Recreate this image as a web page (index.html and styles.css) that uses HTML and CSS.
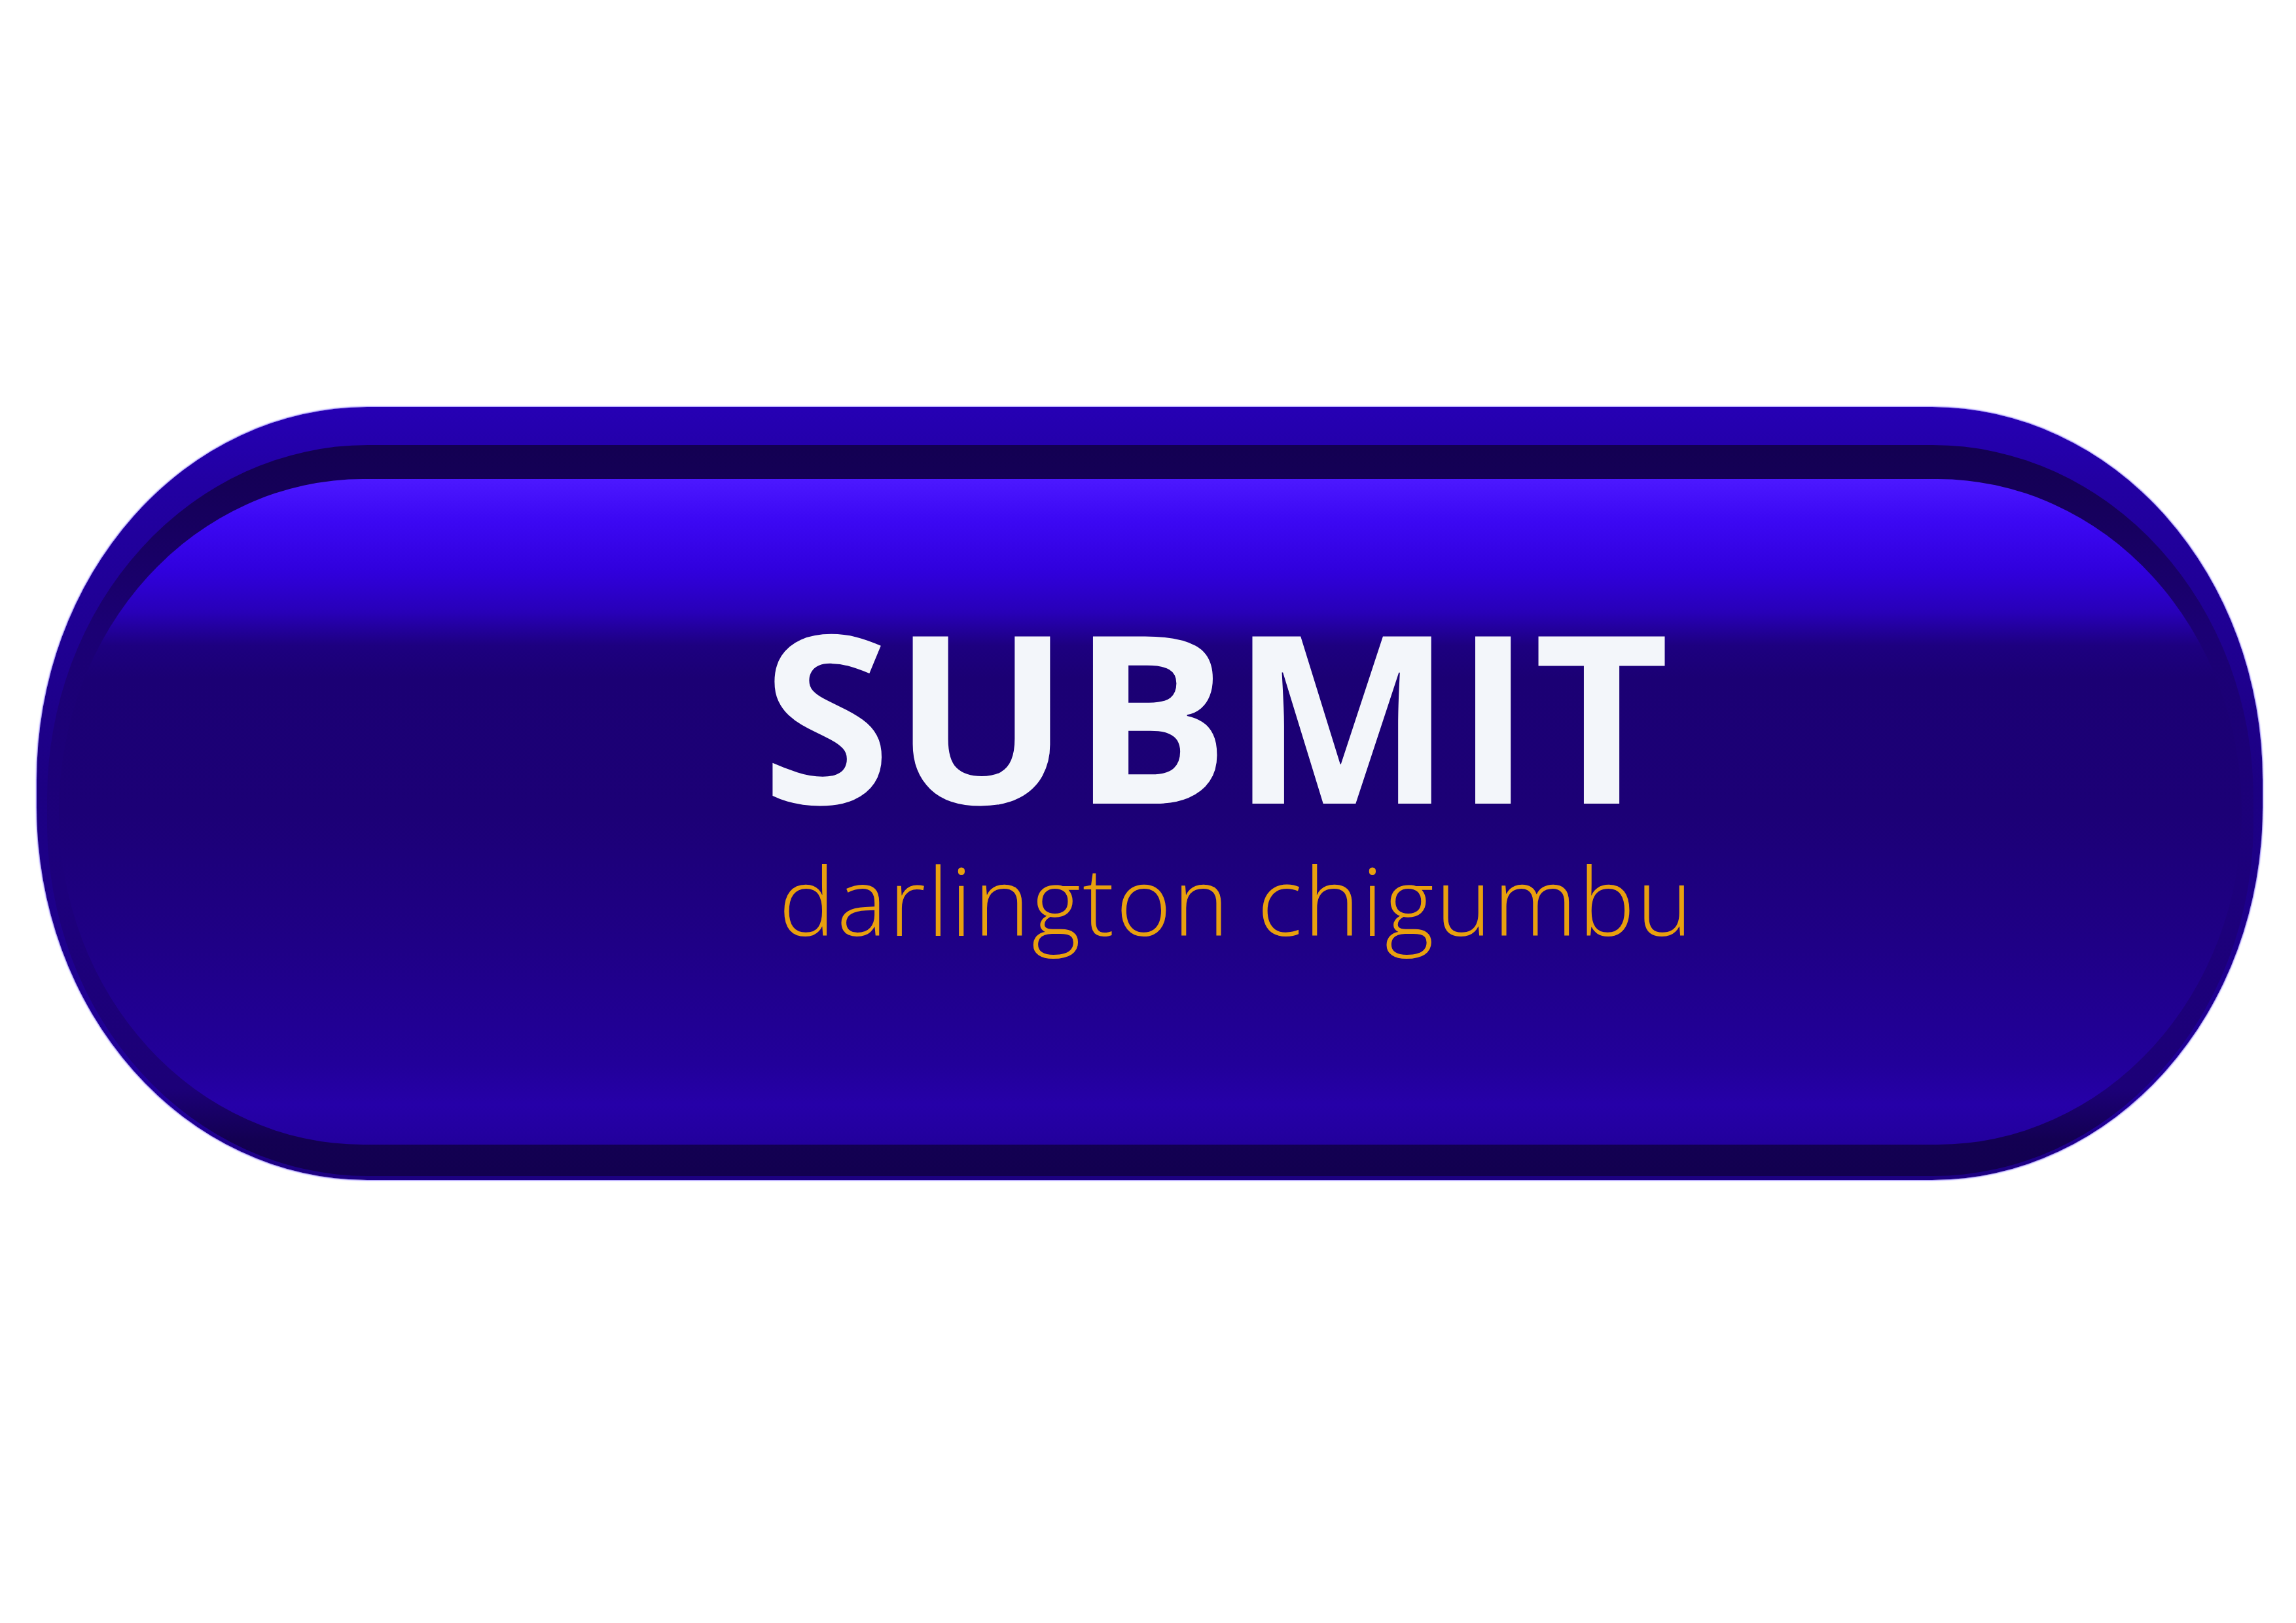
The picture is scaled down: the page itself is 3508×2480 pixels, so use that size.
FILE: index.html
```html
<!DOCTYPE html>
<html lang="en">
<head>
<meta charset="utf-8">
<title>Submit</title>
<link rel="stylesheet" href="styles.css">
</head>
<body>
<main class="stage">
  <div class="shell" role="button" tabindex="0">
    <div class="ring">
      <div class="face">
        <div class="title">SUBMIT</div>
        <div class="subtitle">darlington chigumbu</div>
      </div>
    </div>
  </div>
</main>
</body>
</html>
```

FILE: styles.css
```css
html, body {
  margin: 0;
  padding: 0;
  background: #ffffff;
}

.stage {
  width: 3508px;
  height: 2480px;
  box-sizing: border-box;
  padding: 622px 0 0 56px;
}

.shell {
  display: flex;
  box-sizing: border-box;
  width: 3401px;
  height: 1181px;
  padding: 58px 14px 6px 16px;
  border-radius: 505px / 570px;
  background: linear-gradient(to bottom, #2600b4 0%, #2200a2 10%, #1c0082 50%, #21009a 90%, #1c0080 100%);
  box-shadow: 0 0 2px 1px rgba(70, 40, 255, 0.6);
  cursor: pointer;
}

.ring {
  display: flex;
  flex: 1;
  box-sizing: border-box;
  padding: 52px 18px 48px 18px;
  border-radius: 490px / 540px;
  background: linear-gradient(to bottom, #130052 0%, #150058 6%, #1b0074 25%, #1d007c 60%, #1c0078 88%, #130052 95%, #120050 100%);
}

.face {
  display: flex;
  flex: 1;
  flex-direction: column;
  align-items: flex-start;
  box-sizing: border-box;
  padding: 178px 0 0 1074px;
  border-radius: 465px / 508px;
  background: linear-gradient(to bottom,
    #4c18ff 0%,
    #3c08f4 6%,
    #3000dc 14%,
    #2800b8 20%,
    #1d0080 25%,
    #1b0074 30%,
    #1c0076 50%,
    #1f0086 70%,
    #22009a 88%,
    #2600a8 94%,
    #22009c 100%);
}

.title {
  font-family: "Open Sans", "Liberation Sans", sans-serif;
  font-weight: 700;
  font-size: 358px;
  line-height: 358px;
  letter-spacing: 3px;
  color: #f3f6fa;
  white-space: nowrap;
}

.subtitle {
  margin: 34px 0 0 26px;
  font-family: "Open Sans", "Liberation Sans", sans-serif;
  font-weight: 300;
  font-size: 144px;
  line-height: 144px;
  letter-spacing: 3px;
  color: #e9a00e;
  white-space: nowrap;
}
```
